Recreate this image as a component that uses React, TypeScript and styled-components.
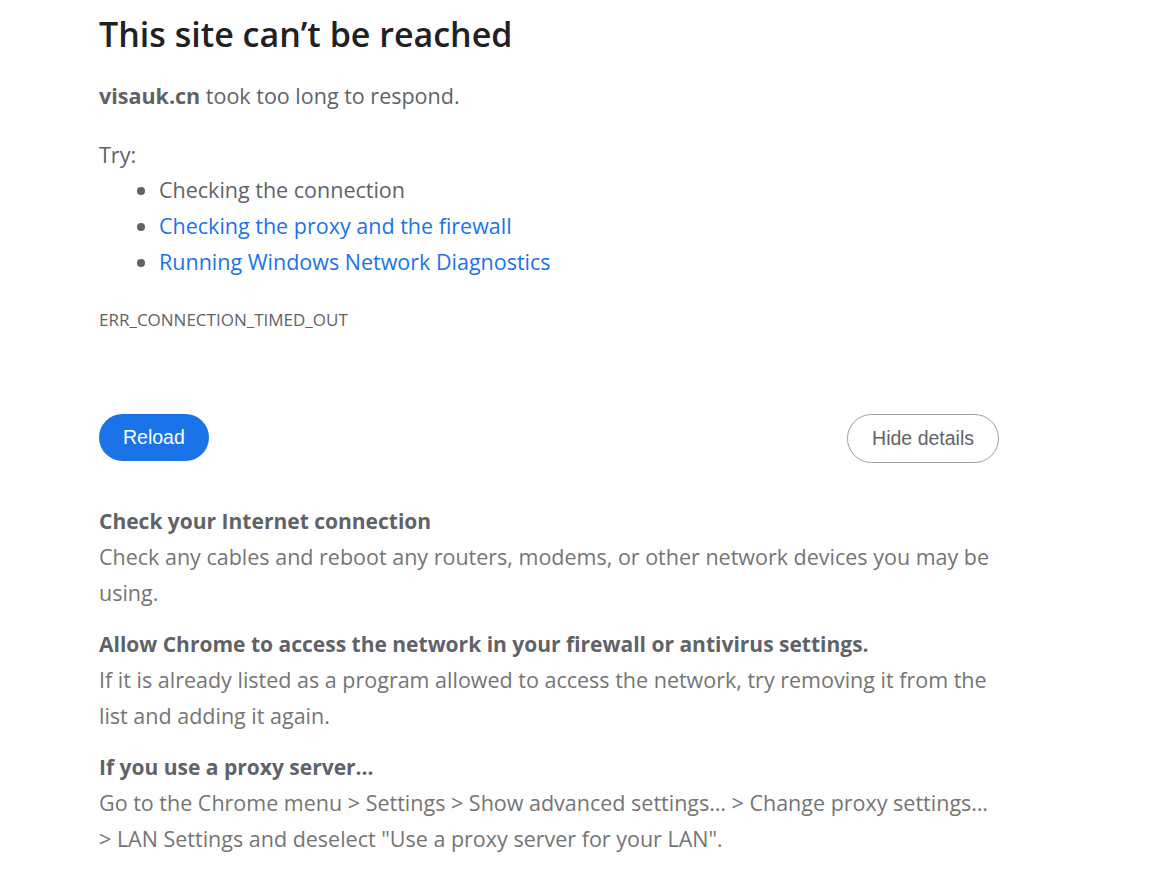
import React from 'react'
import styled, { createGlobalStyle } from 'styled-components'

const GlobalStyle = createGlobalStyle`
  html, body {
    margin: 0;
    padding: 0;
    background: #ffffff;
  }
  body {
    font-family: "Open Sans", "Noto Sans", sans-serif;
    color: #5f6368;
  }
`

const Wrapper = styled.div`
  width: 900px;
  margin-left: 99px;
  padding-top: 10px;
`

const Title = styled.h1`
  margin: 0;
  font-size: 34px;
  line-height: 48px;
  font-weight: 600;
  color: #202124;
`

const Lead = styled.p`
  margin: 23px 0 0;
  font-size: 21.5px;
  line-height: 30px;
  color: #5f6368;
  b {
    font-weight: 700;
  }
`

const TryLabel = styled.p`
  margin: 29px 0 0;
  font-size: 21.5px;
  line-height: 30px;
`

const Suggestions = styled.ul`
  margin: 2px 0 0;
  padding-left: 60px;
  li {
    font-size: 21.5px;
    line-height: 36px;
  }
`

const Link = styled.a<{ $plain?: boolean }>`
  color: ${p => (p.$plain ? '#5f6368' : '#1a73e8')};
  text-decoration: none;
`

const ErrorCode = styled.div`
  margin-top: 30px;
  font-size: 17px;
  line-height: 20px;
  color: #5f6368;
  text-transform: uppercase;
`

const Buttons = styled.div`
  display: flex;
  justify-content: space-between;
  align-items: flex-start;
  margin-top: 84px;
`

const Button = styled.button<{ $primary?: boolean }>`
  font-family: "Liberation Sans", Arial, sans-serif;
  font-size: 19.5px;
  height: ${p => (p.$primary ? '47px' : '49px')};
  padding: 0 24px;
  border-radius: 25px;
  cursor: pointer;
  border: ${p => (p.$primary ? 'none' : '1px solid #9aa0a6')};
  background: ${p => (p.$primary ? '#1a73e8' : '#ffffff')};
  color: ${p => (p.$primary ? '#ffffff' : '#5f6368')};
`

const Details = styled.div`
  margin-top: 40px;
`

const Section = styled.div`
  margin-bottom: 15px;
`

const SectionTitle = styled.div`
  font-size: 21px;
  line-height: 36px;
  font-weight: 700;
  color: #5f6368;
`

const SectionText = styled.p`
  margin: 0;
  font-size: 21.5px;
  line-height: 36px;
  color: #757575;
`

export default function App() {
  return (
    <>
      <GlobalStyle />
      <Wrapper>
        <Title>This site can’t be reached</Title>
        <Lead>
          <b>visauk.cn</b> took too long to respond.
        </Lead>
        <TryLabel>Try:</TryLabel>
        <Suggestions>
          <li>
            <Link $plain>Checking the connection</Link>
          </li>
          <li>
            <Link href="#">Checking the proxy and the firewall</Link>
          </li>
          <li>
            <Link href="#">Running Windows Network Diagnostics</Link>
          </li>
        </Suggestions>
        <ErrorCode>ERR_CONNECTION_TIMED_OUT</ErrorCode>
        <Buttons>
          <Button $primary>Reload</Button>
          <Button>Hide details</Button>
        </Buttons>
        <Details>
          <Section>
            <SectionTitle>Check your Internet connection</SectionTitle>
            <SectionText>
              Check any cables and reboot any routers, modems, or other network devices you may be
              using.
            </SectionText>
          </Section>
          <Section>
            <SectionTitle>Allow Chrome to access the network in your firewall or antivirus settings.</SectionTitle>
            <SectionText>
              If it is already listed as a program allowed to access the network, try removing it
              from the list and adding it again.
            </SectionText>
          </Section>
          <Section>
            <SectionTitle>If you use a proxy server…</SectionTitle>
            <SectionText>
              Go to the Chrome menu &gt; Settings &gt; Show advanced settings… &gt; Change proxy
              settings… &gt; LAN Settings and deselect "Use a proxy server for your LAN".
            </SectionText>
          </Section>
        </Details>
      </Wrapper>
    </>
  )
}
